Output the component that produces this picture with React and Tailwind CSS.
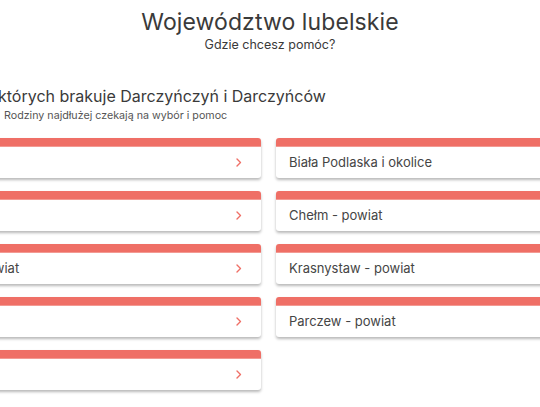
import React from 'react';

const leftCards = ["Lublin", "Zamość", "Hrubieszów - powiat", "Łuków", "Ryki"];
const rightCards = ["Biała Podlaska i okolice", "Chełm - powiat", "Krasnystaw - powiat", "Parczew - powiat"];

function Chevron() {
  return (
    <svg className="w-[6px] h-[9px] shrink-0" viewBox="0 0 6 9" fill="none">
      <path d="M1 1l3.5 3.5L1 8" stroke="#ef6f66" strokeWidth="1.4" strokeLinecap="round" strokeLinejoin="round" />
    </svg>
  );
}

function Card({ label, arrow }) {
  return (
    <div className="h-[40px] rounded-[3px] bg-white shadow-[0_2px_3px_rgba(0,0,0,0.28)] overflow-hidden flex flex-col">
      <div className="h-[9px] bg-[#ef6f66] border-b border-[#f39a93]"></div>
      <div className="flex-1 flex items-center pl-[13px] pr-[19px]">
        <span className="text-[13px] text-[#454545] whitespace-nowrap">{label}</span>
        {arrow && <span className="ml-auto"><Chevron /></span>}
      </div>
    </div>
  );
}

export default function App() {
  return (
    <div className="w-[540px] h-[407px] overflow-hidden bg-white font-['Inter','Open_Sans',sans-serif]">
      <div className="text-center pt-[8px]">
        <h1 className="text-[23px] leading-[28px] text-[#3a3a3a] tracking-[0.1px]">Województwo lubelskie</h1>
        <p className="text-[12.5px] leading-[16px] text-[#3a3a3a] mt-[1px]">Gdzie chcesz pomóc?</p>
      </div>

      <div className="mt-[31px] ml-[-2px]">
        <h2 className="text-[16px] leading-[24px] text-[#3a3a3a] whitespace-nowrap">których brakuje Darczyńczyń i Darczyńców</h2>
        <p className="text-[10.7px] leading-[14px] text-[#555] ml-[6px] mt-[1px] whitespace-nowrap">Rodziny najdłużej czekają na wybór i pomoc</p>
      </div>

      <div className="ml-[-121px] w-[779px] mt-[15px] grid grid-cols-2 gap-x-[15px]">
        <div className="flex flex-col gap-[13px]">
          {leftCards.map((c) => (
            <Card key={c} label={c} arrow />
          ))}
        </div>
        <div className="flex flex-col gap-[13px]">
          {rightCards.map((c) => (
            <Card key={c} label={c} />
          ))}
        </div>
      </div>
    </div>
  );
}
